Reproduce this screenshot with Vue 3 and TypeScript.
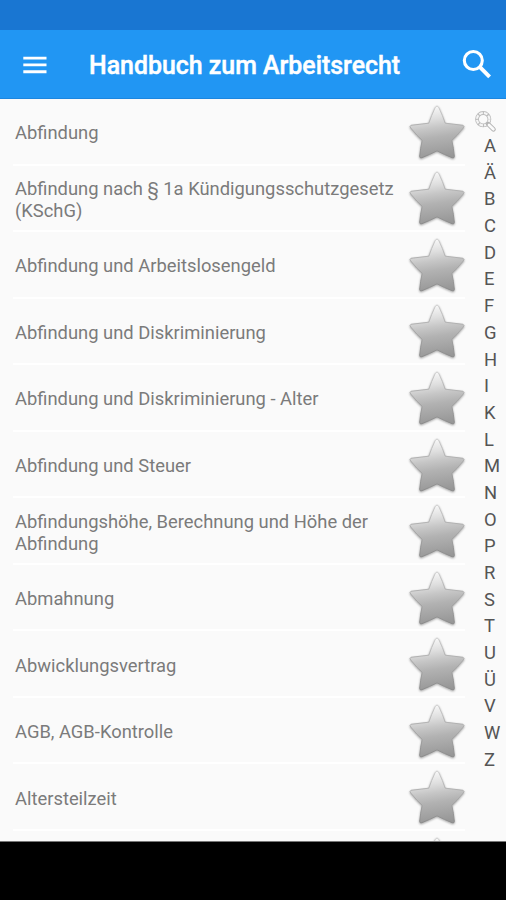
<script setup lang="ts">
const entries: string[] = [
  'Abfindung',
  'Abfindung nach § 1a Kündigungsschutzgesetz (KSchG)',
  'Abfindung und Arbeitslosengeld',
  'Abfindung und Diskriminierung',
  'Abfindung und Diskriminierung - Alter',
  'Abfindung und Steuer',
  'Abfindungshöhe, Berechnung und Höhe der Abfindung',
  'Abmahnung',
  'Abwicklungsvertrag',
  'AGB, AGB-Kontrolle',
  'Altersteilzeit',
  '',
]
const letters: string[] = [...'AÄBCDEFGHIKLMNOPRSTUÜVWZ']
</script>

<template>
  <div class="screen">
    <div class="status"></div>
    <header class="bar">
      <svg class="menu" viewBox="0 0 24 18" aria-hidden="true">
        <path d="M0.3 2.1h23.2M0.3 8.9h23.2M0.3 15.7h23.2" stroke="#fff" stroke-width="2.9" />
      </svg>
      <h1 class="title">Handbuch zum Arbeitsrecht</h1>
      <svg class="search" viewBox="0 0 30 30" fill="none" stroke="#fff" aria-hidden="true">
        <circle cx="11.3" cy="11.5" r="9" stroke-width="3.1" />
        <path d="M17.7 17.9L27.6 27.8" stroke-width="4" />
      </svg>
    </header>
    <main class="content">
      <ul class="list">
        <li v-for="(entry, i) in entries" :key="i" class="row">
          <span class="label">{{ entry }}</span>
          <svg class="star" viewBox="0 0 60 62" aria-hidden="true">
            <defs>
              <linearGradient :id="'fill' + i" x1="0.4" y1="0" x2="0.55" y2="1">
                <stop offset="0" stop-color="#fafafa" />
                <stop offset="0.25" stop-color="#dedede" />
                <stop offset="0.42" stop-color="#c6c6c6" />
                <stop offset="0.6" stop-color="#b2b2b2" />
                <stop offset="1" stop-color="#969696" />
              </linearGradient>
              <linearGradient :id="'edge' + i" x1="0" y1="0" x2="0" y2="1">
                <stop offset="0" stop-color="#cdcdcd" />
                <stop offset="0.4" stop-color="#aeaeae" />
                <stop offset="1" stop-color="#8b8b8b" />
              </linearGradient>
            </defs>
            <path
              d="M28.3 5.3Q30 2.5 31.7 5.3Q35.8 14 38.2 21.2L56 23.3Q57.8 24.2 56.2 26Q50 33.8 44.8 38.4Q46.6 46 47.3 54.4Q47.2 56.5 45.2 55.7Q37 52.4 30 48.8Q23 52.4 14.8 55.7Q12.8 56.5 12.7 54.4Q13.4 46 15.2 38.4Q10 33.8 3.8 26Q2.2 24.2 4 23.3L21.8 21.2Q24.2 14 28.3 5.3Z"
              :fill="`url(#fill${i})`" :stroke="`url(#edge${i})`" stroke-width="1" stroke-linejoin="round"
            />
          </svg>
        </li>
      </ul>
      <nav class="index">
        <svg class="lens" viewBox="0 0 22 22" fill="none" aria-hidden="true">
          <circle cx="8.2" cy="8.2" r="6.2" stroke="#bcbcbc" stroke-width="3.8" />
          <circle cx="8.2" cy="8.2" r="6.2" stroke="#f5f5f5" stroke-width="2.1" stroke-dasharray="3.7 1.17" />
          <path d="M13.2 13.2L18.5 18.4" stroke="#b4b4b4" stroke-width="4.6" stroke-linecap="round" />
          <path d="M14 14L18.4 18.3" stroke="#fafafa" stroke-width="2.7" stroke-linecap="round" />
        </svg>
        <span v-for="letter in letters" :key="letter" class="letter">{{ letter }}</span>
      </nav>
    </main>
    <footer class="navbar"></footer>
  </div>
</template>

<style>
body { margin: 0; background: #000; }
</style>

<style scoped>
.screen {
  display: flex;
  flex-direction: column;
  width: 506px;
  height: 900px;
  overflow: hidden;
  background: #fafafa;
  font-family: Roboto, "Liberation Sans", sans-serif;
}
.status { height: 30px; flex: none; background: #1976d2; }
.bar {
  box-sizing: border-box;
  display: flex;
  align-items: center;
  height: 69px;
  flex: none;
  padding: 0 14px 0 23px;
  background: #2196f3;
  border-bottom: 1px solid #1c86df;
}
.menu { width: 24px; height: 18px; margin-top: 1px; }
.title {
  flex: 1;
  margin: 3px 0 0 42px;
  color: #fff;
  font-size: 24.9px;
  font-weight: 500;
  line-height: 30px;
  white-space: nowrap;
  -webkit-text-stroke: 0.45px #fff;
}
.search { width: 30px; height: 30px; margin-top: -1px; }
.content {
  display: flex;
  justify-content: space-between;
  height: 743px;
  flex: none;
  overflow: hidden;
  box-sizing: border-box;
  border-bottom: 1px solid #777;
}
.list { width: 452px; margin: 0; padding: 0 0 0 13px; list-style: none; }
.row {
  box-sizing: border-box;
  display: flex;
  align-items: center;
  justify-content: space-between;
  height: 66.56px;
  padding-left: 2px;
  border-bottom: 2px solid #fff;
}
.label {
  width: 386px;
  padding-top: 4px;
  color: #7b7b7b;
  font-size: 18.36px;
  line-height: 22px;
}
.star {
  width: 60px;
  height: 62px;
  margin: 3px -2px 0 0;
  flex: none;
  filter: drop-shadow(0 1px 1px rgba(0, 0, 0, 0.35));
}
.index {
  display: flex;
  flex-direction: column;
  width: 31px;
  padding-top: 12px;
}
.lens { width: 22px; height: 22px; flex: none; }
.letter {
  height: 26.7px;
  flex: none;
  padding-left: 9px;
  color: #555;
  font-size: 18.4px;
  line-height: 25.4px;
}
.navbar { flex: 1; background: #000; }
</style>
